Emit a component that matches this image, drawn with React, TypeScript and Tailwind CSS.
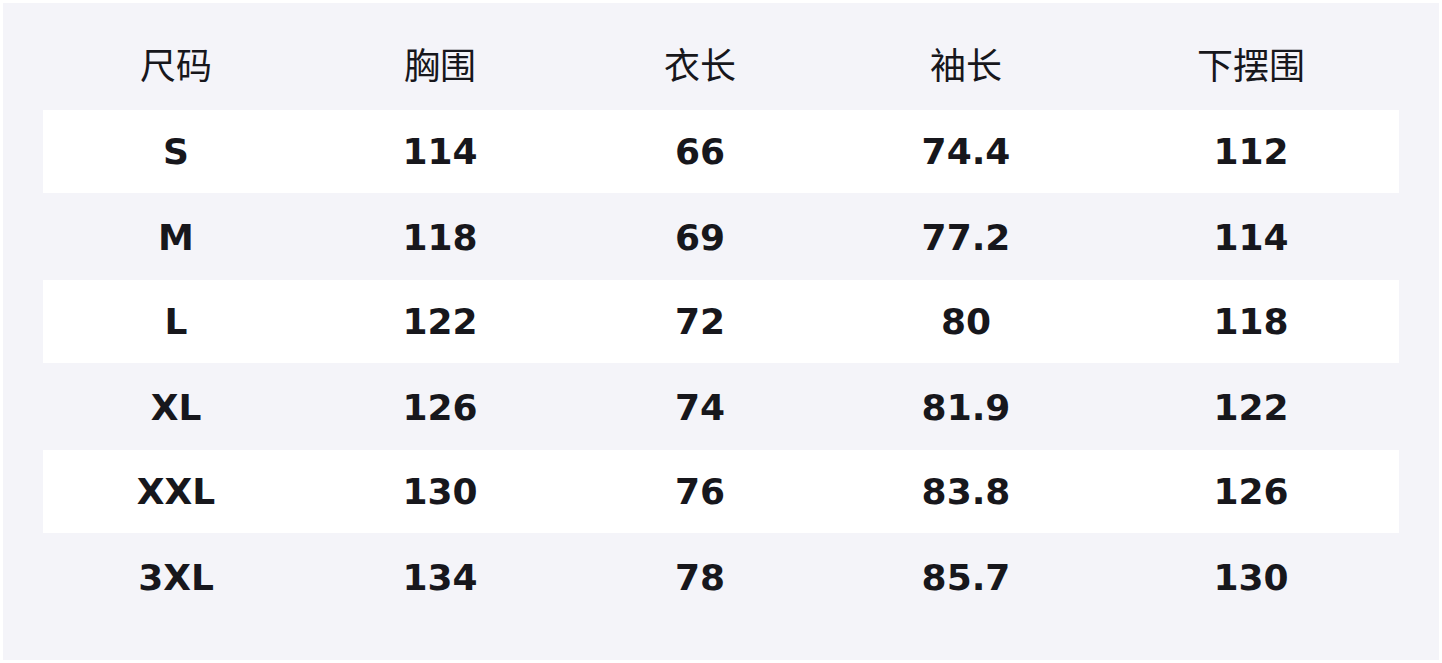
const headers = ["尺码", "胸围", "衣长", "袖长", "下摆围"];

const rows: string[][] = [
  ["S", "114", "66", "74.4", "112"],
  ["M", "118", "69", "77.2", "114"],
  ["L", "122", "72", "80", "118"],
  ["XL", "126", "74", "81.9", "122"],
  ["XXL", "130", "76", "83.8", "126"],
  ["3XL", "134", "78", "85.7", "130"],
];

const cols = "grid grid-cols-[266px_262px_258px_274px_1fr]";

export default function App() {
  return (
    <div className="min-h-screen bg-white p-[3px]">
      <div
        className="h-[657px] w-[1436px] bg-[#f4f4f9] p-10 text-[#17171c]"
        style={{ fontFamily: '"DejaVu Sans", "Noto Sans CJK SC", sans-serif' }}
      >
        <div className={`${cols} h-[67px]`}>
          {headers.map((h) => (
            <div key={h} className="text-center text-[36px] font-normal leading-[48px]">
              {h}
            </div>
          ))}
        </div>
        {rows.map((r, i) => (
          <div
            key={r[0]}
            className={`${cols} h-[85px] items-center ${
              i % 2 === 0 ? "border-b-2 border-[#f4f4f9] bg-white" : ""
            }`}
          >
            {r.map((v, j) => (
              <div key={j} className="text-center text-[36px] font-bold leading-none">
                {v}
              </div>
            ))}
          </div>
        ))}
      </div>
    </div>
  );
}
